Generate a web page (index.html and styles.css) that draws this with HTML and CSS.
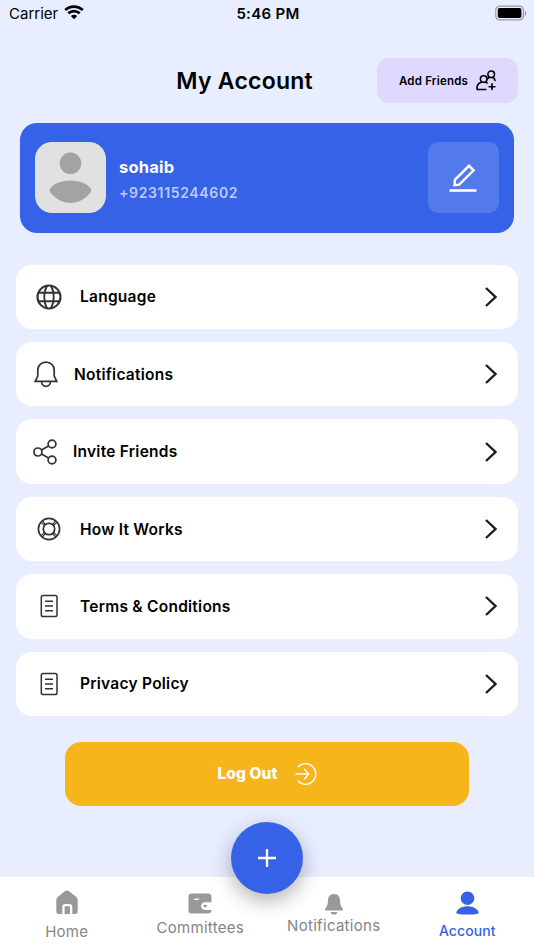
FILE: index.html
```html
<!DOCTYPE html>
<html lang="en">
    <head>
        <meta charset="utf-8">
        <title>My Account</title>
        <meta name="viewport" content="width=device-width" />
        <link rel="stylesheet" href="styles.css">
    </head>
    <body>
        <div class="status-bar">
            <div class="carrier">
                <span>Carrier</span>
                <svg width="20" height="15" viewBox="0 0 20 15" fill="none" stroke="#000" stroke-width="2.7">
                    <path d="M1.2 5.1C6.2.4 13.8.4 18.8 5.1" />
                    <path d="M4.3 8.3C7.5 5.4 12.5 5.4 15.7 8.3" />
                    <path d="M10 14.2L6.8 11C8.7 9.4 11.3 9.4 13.2 11Z" fill="#000" stroke="none" />
                </svg>
            </div>
            <div class="clock">5:46 PM</div>
            <svg class="battery" width="32" height="15" viewBox="0 0 32 15">
                <rect x=".8" y=".1" width="27.6" height="13.8" rx="4" fill="none" stroke="#9699a6" stroke-width="1.2" />
                <rect x="2.8" y="2" width="23.6" height="10" rx="1.8" />
                <path d="M29.8 4.7v5c2-.8 2-4.2 0-5z" fill="#9699a6" />
            </svg>
        </div>

        <header class="header">
            <h1>My Account</h1>
            <button class="add-friends">
                <span>Add Friends</span>
                <svg width="20" height="21" viewBox="0 0 20 21" fill="none" stroke="#000" stroke-width="1.6" stroke-linecap="round" stroke-linejoin="round">
                    <circle cx="7.7" cy="9" r="3.3" />
                    <path d="M9.8 19.5H1.2c-.8-4 1-6.3 4-7.3M9.8 12.2l1.3.8" />
                    <circle cx="15.2" cy="4.3" r="3.3" />
                    <path d="M16.9 7.5c1.3.7 2 1.5 2.1 3M13 7.5l-1.7 1.3M16 13.8v5.8M13.1 16.7h5.8" />
                </svg>
            </button>
        </header>

        <section class="profile">
            <svg class="avatar" width="71" height="71" viewBox="0 0 71 71" fill="#a3a3a3">
                <circle cx="35.5" cy="21.3" r="10.8" />
                <path d="M15 47C22 35.5 49 35.5 56 47Q57 48.5 55.5 50.2C45 64.5 26 64.5 15.5 50.2Q14 48.5 15 47Z" />
            </svg>
            <div class="who">
                <div class="name">sohaib</div>
                <div class="phone">+923115244602</div>
            </div>
            <button class="edit">
                <svg width="28" height="28" viewBox="0 0 28 28" fill="none" stroke="#fff" stroke-width="2.4">
                    <path d="M5.5 21.1L5.9 15.9L20 1.8L24.6 6.3L10.2 20.7Z" />
                    <path d="M.5 26.5h27" stroke-width="2.6" />
                </svg>
            </button>
        </section>

        <ul class="menu">
            <li>
                <svg class="icon wide" width="26" height="26" viewBox="0 0 26 26" stroke-width="2.1">
                    <circle cx="13" cy="13" r="11.5" />
                    <path d="M11 1.5C7.5 8.5 7.5 17.5 11 24.5M15 1.5C18.5 8.5 18.5 17.5 15 24.5M2.5 8.7h21M2 17.3h22" />
                </svg>
                <span>Language</span>
                <svg class="chevron" width="12" height="20" viewBox="0 0 12 20"><path d="M1 1l9.5 9L1 19" /></svg>
            </li>
            <li>
                <svg class="icon" width="24" height="27" viewBox="0 0 24 27" stroke-width="1.7">
                    <path d="M1.2 20.4L3.8 15V9.2C3.8 4.6 7.3 1.2 12 1.2S20.2 4.6 20.2 9.2V15L22.8 20.4ZM7.6 20.4c0 6.6 8.8 6.6 8.8 0" />
                </svg>
                <span>Notifications</span>
                <svg class="chevron" width="12" height="20" viewBox="0 0 12 20"><path d="M1 1l9.5 9L1 19" /></svg>
            </li>
            <li>
                <svg class="icon narrow" width="24" height="26" viewBox="0 0 24 26" stroke-width="1.7">
                    <circle cx="4.9" cy="13" r="4" />
                    <circle cx="19" cy="5" r="3.9" />
                    <circle cx="19" cy="21" r="3.9" />
                    <path d="M8.4 11l7.2-4.1M8.4 15l7.2 4.1" />
                </svg>
                <span>Invite Friends</span>
                <svg class="chevron" width="12" height="20" viewBox="0 0 12 20"><path d="M1 1l9.5 9L1 19" /></svg>
            </li>
            <li>
                <svg class="icon wide" width="26" height="26" viewBox="0 0 26 26" stroke-width="1.7">
                    <circle cx="13" cy="13" r="10.6" />
                    <circle cx="13" cy="13" r="5.7" />
                    <path d="M5 6.4l3.7 3.2M6.4 5l3.2 3.7M19.6 5l-3.2 3.7M21 6.4l-3.7 3.2M5 19.6l3.7-3.2M6.4 21l3.2-3.7M19.6 21l-3.2-3.7M21 19.6l-3.7-3.2" stroke-width="1.2" />
                </svg>
                <span>How It Works</span>
                <svg class="chevron" width="12" height="20" viewBox="0 0 12 20"><path d="M1 1l9.5 9L1 19" /></svg>
            </li>
            <li>
                <svg class="icon wide" width="26" height="26" viewBox="0 0 26 26" stroke-width="1.5">
                    <rect x="5.3" y="2.5" width="15.7" height="21" rx="1.8" />
                    <path d="M9 8.3h8M9 13h8M9 17.8h8" />
                </svg>
                <span>Terms &amp; Conditions</span>
                <svg class="chevron" width="12" height="20" viewBox="0 0 12 20"><path d="M1 1l9.5 9L1 19" /></svg>
            </li>
            <li>
                <svg class="icon wide" width="26" height="26" viewBox="0 0 26 26" stroke-width="1.5">
                    <rect x="5.3" y="2.5" width="15.7" height="21" rx="1.8" />
                    <path d="M9 8.3h8M9 13h8M9 17.8h8" />
                </svg>
                <span>Privacy Policy</span>
                <svg class="chevron" width="12" height="20" viewBox="0 0 12 20"><path d="M1 1l9.5 9L1 19" /></svg>
            </li>
        </ul>

        <button class="logout">
            <span>Log Out</span>
            <svg width="22" height="22" viewBox="0 0 22 22" fill="none" stroke="#fff" stroke-width="1.3" stroke-linecap="round" stroke-linejoin="round">
                <path d="M3.2 3.7A10.3 10.3 0 1 1 3.2 18.3" />
                <path d="M1 11h12.8M9.6 6.3L13.8 11L9.6 15.7" />
            </svg>
        </button>

        <nav class="tabs">
            <a class="tab home">
                <svg width="22" height="24" viewBox="0 0 22 24">
                    <path d="M1.5 7.3L8.5 1.4Q11 -.6 13.5 1.4L20.5 7.3Q21.7 8.3 21.7 10V21.2Q21.7 24 18.9 24H16.3V17Q16.3 14 13.5 14H9.2Q6.3 14 6.3 17V24H3.1Q.3 24 .3 21.2V10Q.3 8.3 1.5 7.3Z" />
                    <path d="M8.6 24V17.3Q8.6 16.3 9.6 16.3H13Q14 16.3 14 17.3V24Z" />
                </svg>
                <span>Home</span>
            </a>
            <a class="tab committees">
                <svg width="24" height="21" viewBox="0 0 24 21">
                    <path d="M3.5.5H20Q23.5.5 23.5 4V9.3H17.5C11.5 9.3 11.5 17 17.5 17H23.5Q23.2 20.5 20 20.5H3.5Q.5 20.5 .5 17.5V3.5Q.5.5 3.5.5Z" />
                    <rect x="6" y="5.5" width="5" height="1.5" rx=".7" fill="#fff" />
                    <ellipse cx="17.2" cy="13" rx="1.9" ry="1.2" />
                </svg>
                <span>Committees</span>
            </a>
            <a class="tab alerts">
                <svg width="18" height="21" viewBox="0 0 18 21">
                    <path d="M9 0C4.9 0 3.2 2.8 3 6.2C2.8 9.7 2.7 11.2 1 13.5C-.6 15.7 0 16.4 1.2 16.4H16.8C18 16.4 18.6 15.7 17 13.5C15.3 11.2 15.2 9.7 15 6.2C14.8 2.8 13.1 0 9 0ZM5.7 18H12.3Q12 20.6 9 20.6T5.7 18Z" />
                </svg>
                <span>Notifications</span>
            </a>
            <a class="tab account">
                <svg width="23" height="24" viewBox="0 0 23 24">
                    <circle cx="11.5" cy="7.2" r="6.8" />
                    <path d="M.3 21.5C3 13.3 20 13.3 22.7 21.5C23 22.8 20 23.6 11.5 23.6S0 22.8 .3 21.5Z" />
                </svg>
                <span>Account</span>
            </a>
            <button class="fab">
                <svg width="18" height="18" viewBox="0 0 18 18" stroke="#fff" stroke-width="2.3"><path d="M9 0v18M0 9h18" /></svg>
            </button>
        </nav>
    </body>
</html>
```
FILE: styles.css
```css
* {
    box-sizing: border-box;
}

body {
    display: flex;
    flex-direction: column;
    height: 950px;
    margin: 0;
    overflow: hidden;
    color: #000;
    background: #e8eeff;
    font-family: Inter, "Liberation Sans", sans-serif;
}

button {
    display: flex;
    align-items: center;
    justify-content: center;
    padding: 0;
    border: 0;
    font-family: inherit;
}

svg {
    display: block;
    flex: none;
    overflow: visible;
}

.status-bar {
    display: grid;
    grid-template-columns: 1fr auto 1fr;
    align-items: center;
    height: 28px;
    padding: 0 7px 1px 9px;
    font-size: 15px;
}

.carrier {
    display: flex;
    align-items: center;
    gap: 6px;
}

.carrier svg {
    margin-top: -2px;
}

.clock {
    font-weight: 600;
    letter-spacing: 0.3px;
}

.battery {
    justify-self: end;
    margin-top: -1px;
}

.header {
    display: flex;
    align-items: center;
    justify-content: flex-end;
    gap: 64px;
    height: 45px;
    margin: 30px 16px 0;
}

h1 {
    margin: 0;
    padding-top: 1px;
    font-size: 23px;
    font-weight: 600;
    letter-spacing: 0.25px;
    white-space: nowrap;
}

.add-friends {
    gap: 8px;
    width: 141px;
    height: 45px;
    border-radius: 12px;
    color: #000;
    background: #dfd8ff;
    font-size: 11.5px;
    font-weight: 600;
    letter-spacing: 0.2px;
}

.add-friends span {
    padding-top: 1px;
}

.profile {
    display: flex;
    align-items: center;
    height: 109.5px;
    margin: 20px 20px 0 19.5px;
    padding: 0 15.5px;
    border-radius: 17px;
    background: #3562e7;
}

.avatar {
    border-radius: 17px;
    background: #e1e1e1;
}

.who {
    flex: 1;
    margin-left: 13px;
    padding-top: 4px;
}

.name {
    color: #fff;
    font-size: 16.5px;
    font-weight: 700;
    line-height: 24px;
    letter-spacing: 0.2px;
}

.phone {
    margin-top: 3px;
    color: #bccbf8;
    font-size: 14px;
    font-weight: 600;
    line-height: 22px;
    letter-spacing: 0.65px;
}

.edit {
    width: 71px;
    height: 71px;
    border-radius: 10px;
    background: #527aeb;
}

.menu {
    display: flex;
    flex-direction: column;
    gap: 13px;
    margin: 32.2px 16px 0;
    padding: 0;
    list-style: none;
}

.menu li {
    display: flex;
    align-items: center;
    height: 64.4px;
    padding: 0 21.5px 0 18px;
    border-radius: 16px;
    background: #fff;
    font-size: 15.5px;
    font-weight: 600;
    letter-spacing: 0.25px;
}

.icon {
    margin-right: 16px;
    fill: none;
    stroke: #333;
}

.icon.wide {
    margin: 0 18px 0 2px;
}

.icon.narrow {
    margin-left: -1px;
}

.chevron {
    margin-left: auto;
    fill: none;
    stroke: #1c1c1c;
    stroke-width: 2.4;
}

.logout {
    gap: 17px;
    width: 404.5px;
    height: 64.5px;
    margin: 25.5px auto 0;
    border-radius: 16px;
    color: #fff;
    background: #f6b51b;
    font-size: 15.5px;
    font-weight: 800;
    letter-spacing: 0.1px;
}

.tabs {
    position: relative;
    display: grid;
    grid-template-columns: repeat(4, 1fr);
    height: 73px;
    margin-top: auto;
    background: #fff;
}

.tab {
    display: flex;
    flex-direction: column;
    align-items: center;
    color: #858585;
    font-size: 15px;
    line-height: 20px;
    letter-spacing: 0.3px;
}

.tab svg {
    fill: #999;
}

.home {
    padding-top: 13px;
    gap: 8px;
}

.committees {
    padding-top: 16px;
    gap: 4px;
}

.alerts {
    padding-top: 17px;
    gap: 1px;
}

.account {
    padding-top: 14px;
    gap: 6px;
    color: #3562e7;
    font-size: 14px;
    font-weight: 500;
    letter-spacing: 0.1px;
}

.account svg {
    fill: #3562e7;
}

/* floating button sits over the edge of the tab bar */
.fab {
    position: absolute;
    top: -55px;
    left: calc(50% - 36px);
    width: 72px;
    height: 72px;
    border-radius: 50%;
    background: #3562e7;
    box-shadow: 0 7px 20px rgba(0, 0, 0, 0.3);
}
```
